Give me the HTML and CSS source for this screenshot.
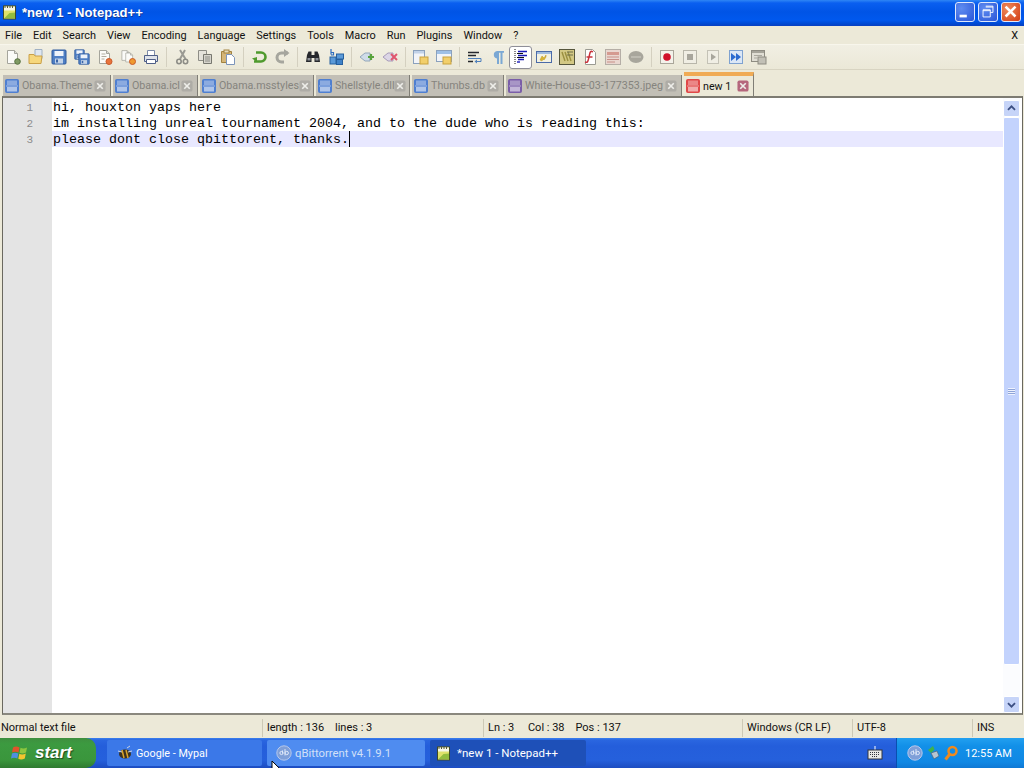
FILE: index.html
```html
<!DOCTYPE html>
<html lang="en">
<head>
<meta charset="UTF-8">
<title>*new 1 - Notepad++</title>
<link rel="stylesheet" href="styles.css">
</head>
<body>
<svg class="defs" width="0" height="0">
  <symbol id="tab-disk" viewBox="0 0 14 14">
    <rect x="0.5" y="0.5" width="13" height="13" rx="1" fill="currentColor" stroke="currentColor"/>
    <rect x="2" y="1.5" width="10" height="4.5" fill="#fff" opacity="0.35"/>
    <rect x="2" y="8" width="10" height="4.5" fill="#fff" opacity="0.55"/>
    <rect x="1" y="6.5" width="12" height="1" fill="#fff" opacity="0.5"/>
  </symbol>
  <symbol id="tab-x" viewBox="0 0 13 13">
    <rect x="0.5" y="0.5" width="12" height="12" rx="2" fill="currentColor"/>
    <path d="M3.5 3.5l6 6M9.5 3.5l-6 6" stroke="#eeeeea" stroke-width="1.800"/>
  </symbol>
  <symbol id="page" viewBox="0 0 16 16">
    <path d="M2.5 1.5h7l3 3v10h-10z" fill="#fbfbf8" stroke="#a5a59c"/>
    <path d="M9.5 1.5v3h3" fill="#dcdcd4" stroke="#a5a59c"/>
  </symbol>
  <symbol id="floppy" viewBox="0 0 16 16">
    <rect x="1" y="1" width="14" height="14" rx="1" fill="#4f7fc4" stroke="#2f5a9e"/>
    <rect x="3.5" y="2" width="9" height="5" fill="#eef3fa"/>
    <rect x="4" y="9.5" width="8" height="5" fill="#c3d3e8"/>
    <rect x="5" y="10.5" width="2" height="3" fill="#3a64a6"/>
  </symbol>
  <symbol id="qb-logo" viewBox="0 0 16 16">
    <circle cx="8" cy="8" r="7.2" fill="#7f9fd8" stroke="#b6c8ec"/>
    <path d="M6.5 5.5v3M3.9 8a1.6 1.6 0 1 0 3.2 0a1.6 1.6 0 1 0-3.2 0M9 4v6.500M9 8a1.700 1.700 0 1 1 3.400 0a1.700 1.700 0 1 1-3.400 0" fill="none" stroke="#dfe8f8"/>
  </symbol>
  <symbol id="notepad" viewBox="0 0 16 16">
    <rect x="1.500" y="2" width="12" height="13" fill="#dfe26a" stroke="#3f4a2a"/>
    <rect x="2" y="2.500" width="11" height="4" fill="#f6f6e8"/>
    <path d="M3 1v3M5.500 1v3M8 1v3M10.500 1v3" stroke="#55583a"/>
    <path d="M2.500 14l5-5 5.500-.5v6z" fill="#93bd3e"/>
  </symbol>
</svg>

<div class="titlebar">
  <svg class="title-icon"><use href="#notepad"/></svg>
  <span class="title-text">*new 1 - Notepad++</span>
  <div class="win-buttons">
    <div class="win-btn">
      <svg viewBox="0 0 20 20"><rect x="4" y="13" width="8" height="3" fill="#fff"/></svg>
    </div>
    <div class="win-btn">
      <svg viewBox="0 0 20 20"><path d="M7.500 3.500h8v7h-3M4.500 7.500h8v8h-8zM4.500 8.500h8M7.500 4.500h8" fill="none" stroke="#fff"/></svg>
    </div>
    <div class="win-btn win-close">
      <svg viewBox="0 0 20 20"><path d="M4 4l11 11M15 4L4 15" stroke="#fff" stroke-width="2.800"/></svg>
    </div>
  </div>
</div>

<div class="menubar">
  <span class="menu-item">File</span>
  <span class="menu-item">Edit</span>
  <span class="menu-item">Search</span>
  <span class="menu-item">View</span>
  <span class="menu-item">Encoding</span>
  <span class="menu-item">Language</span>
  <span class="menu-item">Settings</span>
  <span class="menu-item">Tools</span>
  <span class="menu-item">Macro</span>
  <span class="menu-item">Run</span>
  <span class="menu-item">Plugins</span>
  <span class="menu-item">Window</span>
  <span class="menu-item">?</span>
  <span class="menu-close">X</span>
</div>

<div class="toolbar">
  <div class="tool"><svg viewBox="0 0 16 16"><use href="#page"/><circle cx="12.500" cy="12.500" r="2.800" fill="#7f9a63" stroke="#56703f"/></svg></div>
  <div class="tool"><svg viewBox="0 0 16 16"><path d="M7 .5h7v9H7z" fill="#dfe7f0" stroke="#9fb0c4"/><path d="M1 5.500h5l1 1.500h7l-1 7.500H1z" fill="#f6d77c" stroke="#caa048"/></svg></div>
  <div class="tool"><svg viewBox="0 0 16 16"><use href="#floppy"/></svg></div>
  <div class="tool"><svg viewBox="0 0 16 16"><use href="#floppy" width="11" height="11" x="0" y="0"/><use href="#floppy" width="12" height="12" x="4" y="4"/></svg></div>
  <div class="tool"><svg viewBox="0 0 16 16"><use href="#page"/><path d="M4.500 5h4M4.500 7.500h5M4.500 10h3" stroke="#b0aca0"/><circle cx="12" cy="12.500" r="3" fill="#e8743c" stroke="#c95a2a"/></svg></div>
  <div class="tool"><svg viewBox="0 0 16 16"><use href="#page" width="12" height="13" x="0" y="0"/><use href="#page" width="11" height="13" x="4" y="2"/><circle cx="12.500" cy="12.500" r="3" fill="#ef9a2e" stroke="#c95a2a"/></svg></div>
  <div class="tool"><svg viewBox="0 0 16 16"><path d="M4.500 1.500h7v5h-7z" fill="#fff" stroke="#7d8ba8"/><path d="M1.500 6.500h13v6h-13z" fill="#dfe3ea" stroke="#4f5f88"/><path d="M3.500 10.500h9v4h-9z" fill="#fff" stroke="#4f5f88"/></svg></div>
  <div class="tool-sep"></div>
  <div class="tool"><svg viewBox="0 0 16 16"><path d="M11 1L6 10M6 1l5.500 9" stroke="#9a9a94" stroke-width="2" fill="none"/><circle cx="5" cy="12.500" r="2.200" fill="none" stroke="#8c8c86" stroke-width="1.600"/><circle cx="11.500" cy="12.500" r="2.200" fill="none" stroke="#8c8c86" stroke-width="1.600"/></svg></div>
  <div class="tool"><svg viewBox="0 0 16 16"><path d="M1.500 1.500h8v10h-8z" fill="#e4e2da" stroke="#8d8d86"/><path d="M6.500 5.500h8v9h-8z" fill="#d6d4cc" stroke="#77776f"/><path d="M8 8h5M8 10h5M8 12h5" stroke="#8d8d86"/></svg></div>
  <div class="tool"><svg viewBox="0 0 16 16"><path d="M1.500 2.500h10v11h-10z" fill="#d6b678" stroke="#a2823f"/><rect x="4" y="1" width="5" height="3" fill="#e9dcb8" stroke="#a2823f"/><path d="M6.500 5.500h5l3 3v7h-8z" fill="#fff" stroke="#7c94ba"/></svg></div>
  <div class="tool-sep"></div>
  <div class="tool"><svg viewBox="0 0 16 16"><path d="M5 3.500h5a4.500 4.500 0 0 1 0 9H3" fill="none" stroke="#4f9a2e" stroke-width="2.600"/><path d="M6 2L1 3.500 6 7z" fill="#4f9a2e" transform="translate(0 6)"/></svg></div>
  <div class="tool"><svg viewBox="0 0 16 16"><path d="M14 4H7.500a4.500 4.500 0 0 0 0 9H10" fill="none" stroke="#a6a69e" stroke-width="3"/><path d="M10 0l5.500 4-5.500 4z" fill="#a6a69e"/></svg></div>
  <div class="tool-sep"></div>
  <div class="tool"><svg viewBox="0 0 16 16"><path d="M2 6l1.500-3.500h3V6h3V2.500h3L14 6l1 7H9.500V9h-3v4H1z" fill="#26282c"/><rect x="2.500" y="9" width="3" height="2.500" fill="#8b8f96"/><rect x="10.500" y="9" width="3" height="2.500" fill="#8b8f96"/></svg></div>
  <div class="tool"><svg viewBox="0 0 16 16"><path d="M3 0v5.500M3 3.500h2.500v2.500H3" fill="none" stroke="#2f6ec0" stroke-width="1.200"/><rect x="2" y="8" width="6" height="7" fill="#5b9ad8" stroke="#26609f"/><rect x="8.500" y="5" width="7" height="5" fill="#5b9ad8" stroke="#26609f"/><rect x="8.500" y="10.500" width="6" height="5" fill="#3f82c8" stroke="#26609f"/></svg></div>
  <div class="tool-sep"></div>
  <div class="tool"><svg viewBox="0 0 16 16"><path d="M1 8l5-4h5v8H6z" fill="#cfdce8" stroke="#93a7ba"/><path d="M9 8h6M12 5v6" stroke="#58a33c" stroke-width="2.200"/></svg></div>
  <div class="tool"><svg viewBox="0 0 16 16"><path d="M1 8l5-4h5v8H6z" fill="#dcd6e6" stroke="#a79bba"/><path d="M9 5l6 6M15 5l-6 6" stroke="#e0566e" stroke-width="2"/></svg></div>
  <div class="tool-sep"></div>
  <div class="tool"><svg viewBox="0 0 16 16"><rect x="0.500" y="1.500" width="11" height="13" fill="#f2f4f8" stroke="#8ba1bd"/><rect x="1" y="2" width="10" height="2.500" fill="#c2d2e8"/><rect x="7" y="8" width="8" height="7" fill="#f2cf6b" stroke="#c9a23f"/></svg></div>
  <div class="tool"><svg viewBox="0 0 16 16"><rect x="0.500" y="1.500" width="15" height="11" fill="#f2f4f8" stroke="#8ba1bd"/><rect x="1" y="2" width="14" height="3" fill="#9fc0e6"/><rect x="7" y="8" width="8" height="7" fill="#f2cf6b" stroke="#c9a23f"/></svg></div>
  <div class="tool-sep"></div>
  <div class="tool"><svg viewBox="0 0 16 16"><path d="M1 3.500h11M1 6.500h8M1 12.500h5" stroke="#26282c" stroke-width="1.400"/><path d="M1 9.500h13v3H9" fill="none" stroke="#4f80bc"/><path d="M10 10.500v4L7.500 12.500z" fill="#4f80bc"/></svg></div>
  <div class="tool"><svg viewBox="0 0 16 16"><path d="M7 2h7v1.800h-1.500V15h-2V3.800H9V15H7V9.500A3.800 3.800 0 0 1 7 2z" fill="#7ba8d4"/></svg></div>
  <div class="tool tool-on"><svg viewBox="0 0 16 16"><path d="M2 0v16" stroke="#111" stroke-dasharray="1 1"/><path d="M5 2.500h9M5 6.500h9M5 10.500h6" stroke="#1a1ab8" stroke-width="1.600"/><path d="M4 4.500h6M4 8.500h7" stroke="#111" stroke-width="1.200"/><path d="M4 13h3" stroke="#1a1ab8" stroke-width="1.400"/></svg></div>
  <div class="tool"><svg viewBox="0 0 16 16"><rect x="0.500" y="2.500" width="15" height="11" fill="#f3f1e2" stroke="#4a6aa8"/><rect x="1" y="3" width="14" height="2" fill="#9fbbe0"/><path d="M4 11l2-4 2 2 2-3v2l-2 3-1-1-1 2z" fill="#d9b52f" stroke="#b8962a" stroke-width="0.500"/></svg></div>
  <div class="tool"><svg viewBox="0 0 16 16"><rect x="0.500" y="0.500" width="15" height="15" fill="#d3c884" stroke="#56563c"/><path d="M3 3l3 9M6 3l3 9M9 3l3 9" stroke="#9a8f3f" stroke-width="1.400"/><path d="M8 3h6M8 6h6" stroke="#6f6f4a"/></svg></div>
  <div class="tool"><svg viewBox="0 0 16 16"><path d="M3.500 .5h7l3 3v12h-10z" fill="#fff" stroke="#9a9a92"/><path d="M11 3c-3-2-3 1-4 5s-1 6-4 5M4.500 8h6" fill="none" stroke="#c8323a" stroke-width="1.500"/></svg></div>
  <div class="tool"><svg viewBox="0 0 16 16"><rect x="0.500" y="0.500" width="15" height="15" fill="#ead7d0" stroke="#b5aea6"/><rect x="2" y="3" width="12" height="3" fill="#d59a90"/><path d="M2 8h12M2 10.500h12M2 13h8" stroke="#c89088"/></svg></div>
  <div class="tool"><svg viewBox="0 0 16 16"><ellipse cx="8" cy="8" rx="7.500" ry="6" fill="#a8a69c"/><path d="M3 8h10" stroke="#bdbbb1" stroke-width="2"/></svg></div>
  <div class="tool-sep"></div>
  <div class="tool"><svg viewBox="0 0 16 16"><rect x="1.500" y="1.500" width="13" height="13" fill="#f4f2ea" stroke="#aaa69a"/><circle cx="8" cy="8" r="3.800" fill="#d0102a"/></svg></div>
  <div class="tool"><svg viewBox="0 0 16 16"><rect x="1.500" y="1.500" width="13" height="13" fill="#f0eee4" stroke="#b8b6aa"/><rect x="5" y="5" width="6" height="6" fill="#a8a69c"/></svg></div>
  <div class="tool"><svg viewBox="0 0 16 16"><rect x="2.500" y="1.500" width="11" height="13" fill="#f0eee4" stroke="#c4c2b6"/><path d="M6 4.500l5 3.500-5 3.500z" fill="#a8a69c"/></svg></div>
  <div class="tool"><svg viewBox="0 0 16 16"><rect x="1.500" y="1.500" width="13" height="13" fill="#dbe7f6" stroke="#7fa2d0"/><path d="M3 4l5 4-5 4zM8 4l5 4-5 4z" fill="#2a6ad0"/></svg></div>
  <div class="tool"><svg viewBox="0 0 16 16"><rect x="0.500" y="1.500" width="13" height="11" fill="#e0ded4" stroke="#8e8c82"/><rect x="1" y="2" width="12" height="2" fill="#a6a49a"/><rect x="7" y="8" width="8" height="7" fill="#c2c0b6" stroke="#8e8c82"/><path d="M3 6.500h8M3 9h3" stroke="#aaa89e"/></svg></div>
</div>

<div class="tabs">
  <div class="tab"><svg class="tab-icon tab-blue"><use href="#tab-disk"/></svg><span class="tab-name">Obama.Theme</span><svg class="tab-close"><use href="#tab-x"/></svg></div>
  <div class="tab"><svg class="tab-icon tab-blue"><use href="#tab-disk"/></svg><span class="tab-name">Obama.icl</span><svg class="tab-close"><use href="#tab-x"/></svg></div>
  <div class="tab"><svg class="tab-icon tab-blue"><use href="#tab-disk"/></svg><span class="tab-name">Obama.msstyles</span><svg class="tab-close"><use href="#tab-x"/></svg></div>
  <div class="tab"><svg class="tab-icon tab-blue"><use href="#tab-disk"/></svg><span class="tab-name">Shellstyle.dll</span><svg class="tab-close"><use href="#tab-x"/></svg></div>
  <div class="tab"><svg class="tab-icon tab-blue"><use href="#tab-disk"/></svg><span class="tab-name">Thumbs.db</span><svg class="tab-close"><use href="#tab-x"/></svg></div>
  <div class="tab"><svg class="tab-icon tab-purple"><use href="#tab-disk"/></svg><span class="tab-name">White-House-03-177353.jpeg</span><svg class="tab-close"><use href="#tab-x"/></svg></div>
  <div class="tab tab-active"><svg class="tab-icon tab-red"><use href="#tab-disk"/></svg><span class="tab-name">new 1</span><svg class="tab-close"><use href="#tab-x"/></svg></div>
</div>

<div class="editor">
  <div class="gutter">
    <div class="line-no">1</div>
    <div class="line-no">2</div>
    <div class="line-no">3</div>
  </div>
  <div class="code">
    <div class="code-line">hi, houxton yaps here</div>
    <div class="code-line">im installing unreal tournament 2004, and to the dude who is reading this:</div>
    <div class="code-line code-current"><span class="caret">please dont close qbittorent, thanks.</span></div>
  </div>
  <div class="scrollbar">
    <div class="scroll-btn"><svg viewBox="0 0 17 17"><path d="M4.500 10l4-4 4 4" fill="none" stroke="#3c4f82" stroke-width="2"/></svg></div>
    <div class="scroll-thumb"><div class="scroll-grip"></div></div>
    <div class="scroll-track"></div>
    <div class="scroll-btn"><svg viewBox="0 0 17 17"><path d="M4.500 7l4 4 4-4" fill="none" stroke="#3c4f82" stroke-width="2"/></svg></div>
  </div>
</div>

<div class="statusbar">
  <span class="status-cell">Normal text file</span>
  <span class="status-cell">length : 136 &nbsp;&nbsp; lines : 3</span>
  <span class="status-cell">Ln : 3 &nbsp;&nbsp;&nbsp; Col : 38 &nbsp;&nbsp; Pos : 137</span>
  <span class="status-cell">Windows (CR LF)</span>
  <span class="status-cell">UTF-8</span>
  <span class="status-cell">INS</span>
</div>

<div class="taskbar">
  <div class="start-btn">
    <svg class="start-flag" viewBox="0 0 18 18">
      <path d="M2 3.500q3-2 6.500 0L7.500 8.500q-3-1.500-6.500 0z" fill="#e2532c"/>
      <path d="M9.500 3.800q3 1.500 6.500-.3l-1 5q-3.500 1.700-6.500.3z" fill="#8cc63f"/>
      <path d="M1 9.500q3-1.500 6.300 0l-1 5q-3-1.500-6.300 0z" fill="#4f8fe0"/>
      <path d="M8.300 9.800q3 1.400 6.500-.3l-1 5q-3.500 1.700-6.500.3z" fill="#f3c52f"/>
    </svg>
    <span class="start-text">start</span>
  </div>
  <div class="task-btn task-mypal">
    <svg class="task-icon" viewBox="0 0 16 16"><ellipse cx="8" cy="9" rx="6" ry="4.500" fill="#3a3020"/><path d="M5 5l2 8M9 5l2 8" stroke="#d9a32a" stroke-width="1.500"/><path d="M1 6l4 1M15 6l-4 1M10 3l3-2" stroke="#c9d4e4"/></svg>
    <span>Google - Mypal</span>
  </div>
  <div class="task-btn task-hover">
    <svg class="task-icon"><use href="#qb-logo"/></svg>
    <span>qBittorrent v4.1.9.1</span>
  </div>
  <div class="task-btn task-active">
    <svg class="task-icon"><use href="#notepad"/></svg>
    <span>*new 1 - Notepad++</span>
  </div>
  <svg class="kbd-icon" viewBox="0 0 16 16"><path d="M8 1v4" stroke="#fff"/><rect x="1" y="5" width="14" height="9" fill="#e8e8e4" stroke="#33363e"/><path d="M3 7.500h10M3 9.500h10M5 11.500h6" stroke="#33363e" stroke-dasharray="1 1"/></svg>
  <div class="tray">
    <svg class="tray-icon"><use href="#qb-logo"/></svg>
    <svg class="tray-icon" viewBox="0 0 16 16"><path d="M3 5l5-4 1.500 3.500L6 8z" fill="#3fb24a"/><path d="M6 8l6-2 2 5-5 3z" fill="#b8c4d0" stroke="#4a5a6a" stroke-width="0.600"/></svg>
    <svg class="tray-icon" viewBox="0 0 16 16"><circle cx="9.500" cy="6" r="4" fill="none" stroke="#f08a1c" stroke-width="2.500"/><path d="M6.500 9.500L2.500 14.500" stroke="#f08a1c" stroke-width="3"/></svg>
    <span class="clock">12:55 AM</span>
  </div>
</div>

<svg class="mouse-pointer" viewBox="0 0 12 18"><path d="M1 1v14l3.500-3.200 2.500 5 2-1-2.500-5H11z" fill="#fff" stroke="#000"/></svg>
</body>
</html>
```

FILE: styles.css
```css
* {
  box-sizing: border-box;
}

html, body {
  margin: 0;
  padding: 0;
}

body {
  position: relative;
  width: 1024px;
  height: 768px;
  overflow: hidden;
  display: flex;
  flex-direction: column;
  background: #ece9d8;
  font-family: "Liberation Sans", Arial, sans-serif;
  font-size: 11px;
  color: #111;
}

.defs {
  position: absolute;
}

/* title bar */
.titlebar {
  flex: 0 0 26px;
  display: flex;
  align-items: center;
  padding: 0 3px 2px 2px;
  background: linear-gradient(#2f86f5 0, #0a5ff0 3px, #0054e6 12px, #0058ee 20px, #0048d0 24px, #0a3fc0 26px);
}

.title-icon {
  width: 16px;
  height: 16px;
}

.title-text {
  margin-left: 4px;
  font-size: 13.1px;
  font-weight: bold;
  color: #fff;
  text-shadow: 1px 1px 0 #0f3a9a;
}

.win-buttons {
  margin-left: auto;
  display: flex;
  gap: 3px;
}

.win-btn {
  width: 20px;
  height: 20px;
  border: 1px solid #dfe8fb;
  border-radius: 3px;
  background: radial-gradient(circle at 30% 30%, #5f8cf0, #2a55d8);
}

.win-btn svg {
  display: block;
  width: 18px;
  height: 18px;
}

.win-close {
  background: radial-gradient(circle at 30% 30%, #ee8a5c, #d23c14);
}

/* menu */
.menubar {
  flex: 0 0 18px;
  display: flex;
  align-items: center;
  padding-left: 5px;
  gap: 11px;
  font-family: Roboto, "Liberation Sans", sans-serif;
  font-size: 10.9px;
  background: #ece9d8;
}

.menu-close {
  margin-left: auto;
  margin-right: 6px;
}

/* toolbar */
.toolbar {
  flex: 0 0 26px;
  display: flex;
  align-items: center;
  padding-left: 1px;
  border-top: 1px solid #f8f6ec;
  border-bottom: 1px solid #d8d4c2;
  background: linear-gradient(#f1efe3, #ebe8d7);
}

.tool {
  flex: 0 0 23px;
  height: 23px;
  display: flex;
  align-items: center;
  justify-content: center;
}

.tool svg {
  width: 16px;
  height: 16px;
}

.tool-on {
  background: #fff;
  border: 1px solid #8f8f98;
  border-radius: 3px;
}

.tool-sep {
  flex: 0 0 8px;
  height: 20px;
  background: linear-gradient(#d4d0c0, #d4d0c0) center / 1px 100% no-repeat;
}

/* tabs */
.tabs {
  flex: 0 0 26px;
  display: grid;
  grid-template-columns: 108px 85px 114px 94px 92px 176px 70px;
  column-gap: 2px;
  padding: 2px 0 0 3px;
  background: #ece9d8;
  font-family: Roboto, "Liberation Sans", sans-serif;
  font-size: 10.7px;
}

.tab {
  display: flex;
  align-items: center;
  margin-top: 3px;
  padding: 0 3px 0 2px;
  background: #c2bfb6;
  color: #85847e;
  border-right: 1px solid #807e76;
}

.tab-icon {
  flex: none;
  width: 14px;
  height: 14px;
  margin-right: 3px;
}

.tab-blue {
  color: #4f7fd0;
}

.tab-purple {
  color: #7a5ea8;
}

.tab-red {
  color: #e04848;
}

.tab-name {
  flex: 1;
  white-space: nowrap;
}

.tab-close {
  flex: none;
  width: 12px;
  height: 12px;
  margin-right: 1px;
  color: #aeaca6;
}

.tab-active {
  margin-top: 0;
  background: #ece9d8;
  border-top: 4px solid #f0ab55;
  color: #111;
}

.tab-active .tab-close {
  color: #b5667c;
}

/* editor */
.editor {
  flex: 0 0 619px;
  display: flex;
  margin: 0 1px 0 2px;
  border-top: 2px solid #7d7b72;
  border-left: 1px solid #6a685f;
  border-right: 1px solid #6a685f;
  border-bottom: 2px solid #8a887e;
  background: #fff;
}

.gutter {
  flex: 0 0 49px;
  padding-top: 1px;
  background: #e4e4e4;
  color: #8c8c8c;
  font-family: "Liberation Mono", "Courier New", monospace;
  font-size: 11px;
  text-align: right;
}

.line-no {
  height: 16px;
  line-height: 18px;
  padding-right: 19px;
}

.code {
  flex: 1;
  padding-top: 1px;
  font-family: "Liberation Mono", "Courier New", monospace;
  font-size: 13.33px;
  color: #000;
}

.code-line {
  height: 16px;
  line-height: 18px;
  padding-left: 1px;
  white-space: pre;
}

.code-current {
  background: #e8e8ff;
}

.caret {
  display: inline-block;
  height: 16px;
  margin-right: -1px;
  box-shadow: 1px 0 0 #000;
}

.scrollbar {
  flex: 0 0 17px;
  margin-right: 2px;
  display: flex;
  flex-direction: column;
  padding-top: 2px;
  background: #fbfcfe;
}

.scroll-btn {
  flex: 0 0 17px;
  border: 1px solid #fff;
  border-radius: 2px;
  background: #c6d4f8;
}

.scroll-btn svg {
  display: block;
  width: 15px;
  height: 15px;
}

.scroll-thumb {
  flex: 0 0 548px;
  display: flex;
  align-items: center;
  justify-content: center;
  border: 1px solid #fff;
  border-radius: 2px;
  background: #c3d3fd;
}

.scroll-grip {
  width: 7px;
  height: 7px;
  background: repeating-linear-gradient(#eef2fe 0 1px, #8ea4d8 1px 2px);
}

.scroll-track {
  flex: 1;
}

/* status bar */
.statusbar {
  flex: 0 0 23px;
  display: grid;
  grid-template-columns: 261px 221px 259px 110px 120px 30px;
  align-items: center;
  padding: 2px 0 0 1px;
  font-family: Roboto, "Liberation Sans", sans-serif;
  font-size: 11px;
  background: #ece9d8;
}

.status-cell {
  height: 18px;
  line-height: 18px;
  padding-left: 4px;
  border-left: 1px solid #cdc9b6;
  white-space: nowrap;
}

.status-cell:first-child {
  padding-left: 0;
  border-left: none;
}

/* taskbar */
.taskbar {
  flex: 0 0 30px;
  display: flex;
  align-items: center;
  background: linear-gradient(#3a80ee 0, #2a66e0 2px, #245edb 8px, #2560dc 22px, #1c4cc0 30px);
}

.start-btn {
  flex: 0 0 96px;
  height: 30px;
  display: flex;
  align-items: center;
  padding-left: 11px;
  border-radius: 0 10px 10px 0;
  background: linear-gradient(#3f8f3f 0, #3c9a40 6px, #3a963c 22px, #2f7a30 30px);
}

.start-flag {
  width: 18px;
  height: 18px;
}

.start-text {
  margin-left: 6px;
  font-size: 17px;
  font-weight: bold;
  font-style: italic;
  color: #fff;
  text-shadow: 1px 1px 1px #1d4a1d;
}

.task-btn {
  flex: 0 0 158px;
  height: 26px;
  display: flex;
  align-items: center;
  gap: 3px;
  margin-left: 5px;
  padding-left: 9px;
  border-radius: 2px;
  background: #3b78e8;
  color: #fff;
  font-family: Roboto, "Liberation Sans", sans-serif;
  font-size: 11px;
}

.task-mypal {
  margin-left: 11px;
  flex-basis: 155px;
  padding-left: 10px;
  font-size: 10.8px;
}

.task-hover {
  background: #4f8cf0;
  color: #d2e0f8;
  font-size: 11.3px;
}

.task-active {
  flex-basis: 156px;
  gap: 5px;
  background: #1e50b8;
  padding-left: 6px;
  font-size: 11.5px;
}

.task-icon {
  flex: none;
  width: 16px;
  height: 16px;
}

.kbd-icon {
  flex: none;
  width: 16px;
  height: 16px;
  margin-left: 281px;
}

.tray {
  flex: 1;
  height: 30px;
  margin-left: 13px;
  display: flex;
  align-items: center;
  padding-left: 10px;
  gap: 2px;
  border-left: 1px solid #0a4fb0;
  background: linear-gradient(#22a0f0 0, #1290e8 8px, #1088e4 24px, #0f78d4 30px);
}

.tray-icon {
  flex: none;
  width: 16px;
  height: 16px;
}

.clock {
  margin-left: 4px;
  color: #fff;
  font-family: Roboto, "Liberation Sans", sans-serif;
  font-size: 11px;
}

/* sits over the taskbar */
.mouse-pointer {
  position: absolute;
  left: 271px;
  top: 760px;
  width: 12px;
  height: 18px;
}
```
